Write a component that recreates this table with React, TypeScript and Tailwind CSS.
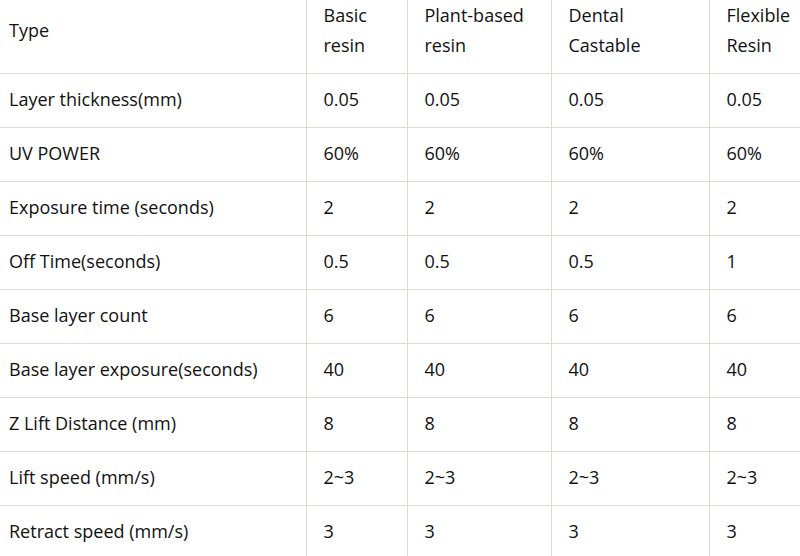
const columns = ['Basic resin', 'Plant-based resin', 'Dental Castable', 'Flexible Resin'];

const rows: [string, string[]][] = [
  ['Layer thickness(mm)', ['0.05', '0.05', '0.05', '0.05']],
  ['UV POWER', ['60%', '60%', '60%', '60%']],
  ['Exposure time (seconds)', ['2', '2', '2', '2']],
  ['Off Time(seconds)', ['0.5', '0.5', '0.5', '1']],
  ['Base layer count', ['6', '6', '6', '6']],
  ['Base layer exposure(seconds)', ['40', '40', '40', '40']],
  ['Z Lift Distance (mm)', ['8', '8', '8', '8']],
  ['Lift speed (mm/s)', ['2~3', '2~3', '2~3', '2~3']],
  ['Retract speed (mm/s)', ['3', '3', '3', '3']],
];

export default function App() {
  return (
    <div className="w-[800px] h-[556px] overflow-hidden bg-white text-[#111] font-['Open_Sans',sans-serif] text-[18px] leading-[30px]">
      <table className="-mt-[10px] w-[860px] table-fixed border-collapse">
        <colgroup>
          <col className="w-[306px]" />
          <col className="w-[101px]" />
          <col className="w-[144px]" />
          <col className="w-[158px]" />
          <col className="w-[151px]" />
        </colgroup>
        <thead>
          <tr className="border-b border-[#dddbd3]">
            <th className="pt-[10px] pb-[13px] pl-[9px] pr-2 text-left align-middle font-normal">Type</th>
            {columns.map((c) => (
              <th
                key={c}
                className="pt-[10px] pb-[13px] pl-[17px] pr-2 text-left align-middle font-normal border-l border-[#dddbd3]"
              >
                {c.split(' ').map((w) => (
                  <div key={w} className="whitespace-nowrap">{w}</div>
                ))}
              </th>
            ))}
          </tr>
        </thead>
        <tbody>
          {rows.map(([label, vals]) => (
            <tr key={label} className="border-b border-[#dddbd3]">
              <td className="pt-[10px] pb-[13px] pl-[9px] pr-2 align-middle whitespace-nowrap">{label}</td>
              {vals.map((v, i) => (
                <td key={i} className="pt-[10px] pb-[13px] pl-[17px] pr-2 align-middle border-l border-[#dddbd3]">
                  {v}
                </td>
              ))}
            </tr>
          ))}
        </tbody>
      </table>
    </div>
  );
}
